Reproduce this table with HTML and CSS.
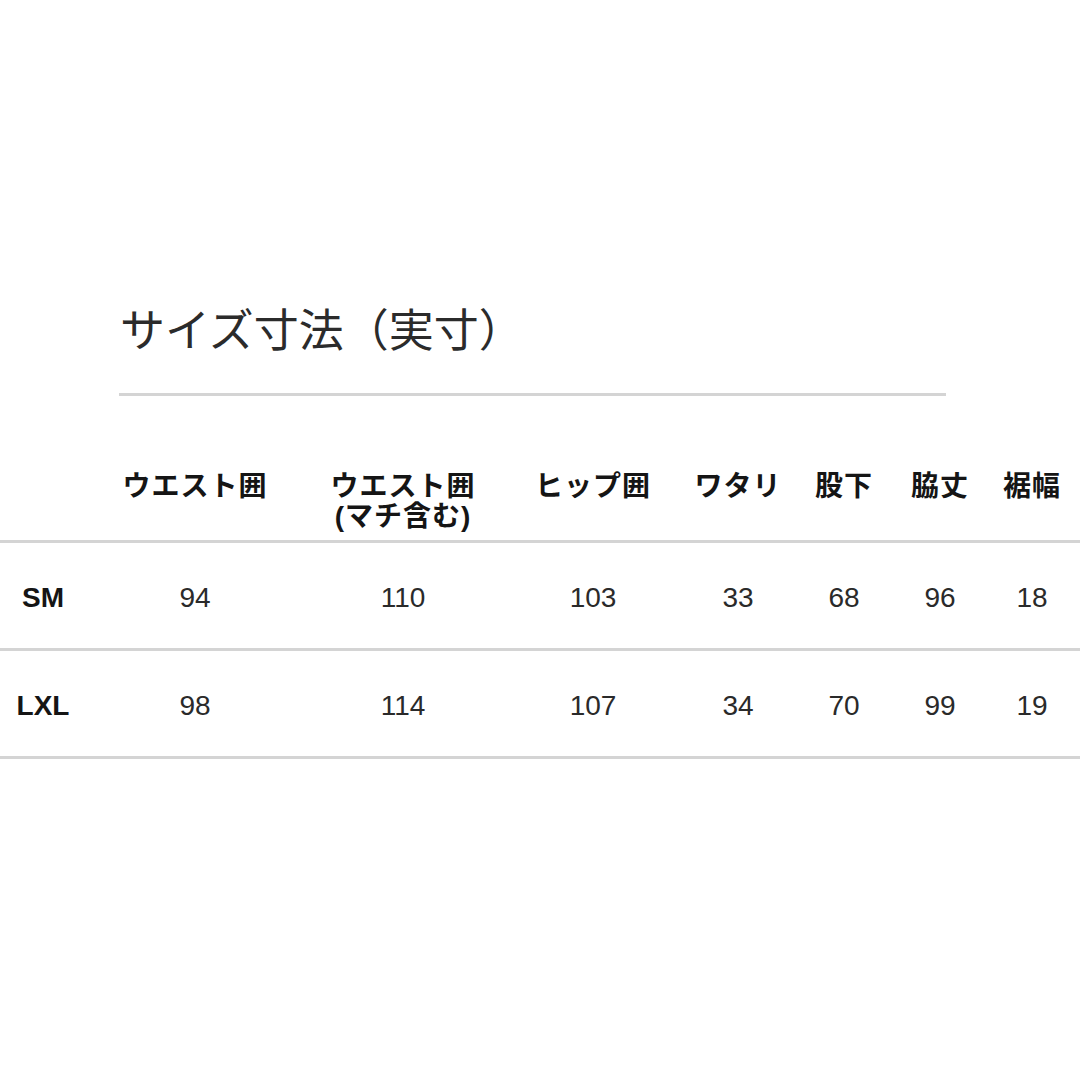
FILE: index.html
```html
<!DOCTYPE html>
<html lang="ja">
<head>
<meta charset="utf-8">
<title>サイズ寸法（実寸）</title>
<link rel="stylesheet" href="styles.css">
</head>
<body>
<div class="page">
  <h1 class="title">サイズ寸法（実寸）</h1>
  <div class="rule"></div>
  <table class="sizes">
    <colgroup>
      <col class="c-label">
      <col class="c-waist">
      <col class="c-waist2">
      <col class="c-hip">
      <col class="c-thigh">
      <col class="c-inseam">
      <col class="c-side">
      <col class="c-hem">
    </colgroup>
    <thead>
      <tr>
        <th></th>
        <th>ウエスト囲</th>
        <th>ウエスト囲<br>(マチ含む)</th>
        <th>ヒップ囲</th>
        <th>ワタリ</th>
        <th>股下</th>
        <th>脇丈</th>
        <th>裾幅</th>
      </tr>
    </thead>
    <tbody>
      <tr>
        <td class="label">SM</td>
        <td>94</td><td>110</td><td>103</td><td>33</td><td>68</td><td>96</td><td>18</td>
      </tr>
      <tr>
        <td class="label">LXL</td>
        <td>98</td><td>114</td><td>107</td><td>34</td><td>70</td><td>99</td><td>19</td>
      </tr>
    </tbody>
  </table>
</div>
</body>
</html>
```

FILE: styles.css
```css
html, body {
  margin: 0;
  padding: 0;
  background: #ffffff;
}

.page {
  width: 1080px;
  height: 1080px;
  padding-top: 298px;
  box-sizing: border-box;
}

.title {
  margin: 0 0 0 120px;
  font-family: "Noto Sans CJK JP", sans-serif;
  font-weight: 400;
  font-size: 45px;
  line-height: 60px;
  color: #2b2b2b;
}

.rule {
  margin: 35px 0 0 119px;
  width: 827px;
  height: 3px;
  background: #d4d4d4;
}

.sizes {
  width: 1080px;
  border-collapse: collapse;
  table-layout: fixed;
  margin-top: 0;
}

.c-label { width: 86px; }
.c-waist { width: 218px; }
.c-waist2 { width: 198px; }
.c-hip { width: 182px; }
.c-thigh { width: 108px; }
.c-inseam { width: 104px; }
.c-side { width: 88px; }
.c-hem { width: 96px; }

.sizes thead tr {
  border-bottom: 3px solid #d4d4d4;
}

.sizes th {
  padding: 76px 0 8px 0;
  vertical-align: top;
  font-family: "Liberation Sans", "Noto Sans CJK JP", sans-serif;
  font-weight: 700;
  font-size: 28px;
  line-height: 30px;
  letter-spacing: 1px;
  color: #151515;
  text-align: center;
}

.sizes tbody tr {
  border-bottom: 3px solid #d4d4d4;
}

.sizes td {
  height: 101px;
  padding: 4px 0 0 0;
  text-align: center;
  vertical-align: middle;
  font-family: "Liberation Sans", Arial, sans-serif;
  font-size: 28px;
  color: #2a2a2a;
}

.sizes td.label {
  font-weight: 700;
  color: #151515;
}
```
